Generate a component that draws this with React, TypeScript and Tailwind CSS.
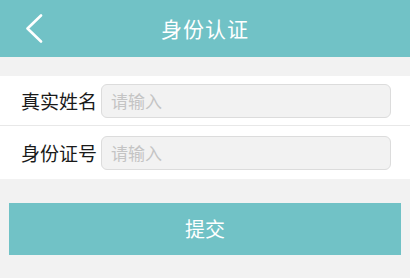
const FIELDS = [
  { label: '真实姓名', rowClass: 'h-[49px]' },
  { label: '身份证号', rowClass: 'h-[53px]' },
]

function BackIcon() {
  return (
    <svg width="20" height="29" viewBox="0 0 20 29" fill="none">
      <path d="M17 1.5 L3.5 14.5 L17 27.5" stroke="white" strokeWidth="2.6" strokeLinecap="round" strokeLinejoin="round" />
    </svg>
  )
}

export default function App() {
  return (
    <div
      className="flex h-[278px] w-[410px] flex-col overflow-hidden bg-[#f2f2f2]"
      style={{ fontFamily: '"Noto Sans CJK SC", "Noto Sans", sans-serif' }}
    >
      <header className="relative flex h-[57px] shrink-0 items-center justify-center bg-[#71c2c6]">
        <button className="absolute left-[24px] top-[14px]" aria-label="返回">
          <BackIcon />
        </button>
        <h1 className="text-[21px] font-normal tracking-[1px] text-white">身份认证</h1>
      </header>

      <div className="mt-[19px] bg-white">
        {FIELDS.map((field, i) => (
          <div key={field.label}>
            {i > 0 && <div className="h-px bg-[#e8e8e8]" />}
            <div className={`flex items-center pl-[21px] pr-[19px] ${field.rowClass}`}>
              <span className="w-[80px] shrink-0 text-[19px] leading-none text-[#1a1a1a]">
                {field.label}
              </span>
              <input
                placeholder="请输入"
                className="h-[34px] min-w-0 flex-1 rounded-[6px] border border-[#dcdcdc] bg-[#f2f2f2] pl-[9px] text-[17px] text-[#333] outline-none placeholder:text-[#c4c4c4]"
              />
            </div>
          </div>
        ))}
      </div>

      <div className="px-[9px] pt-[24px]">
        <button className="flex h-[52px] w-full items-center justify-center bg-[#71c2c6] text-[20px] text-white">
          提交
        </button>
      </div>
    </div>
  )
}
